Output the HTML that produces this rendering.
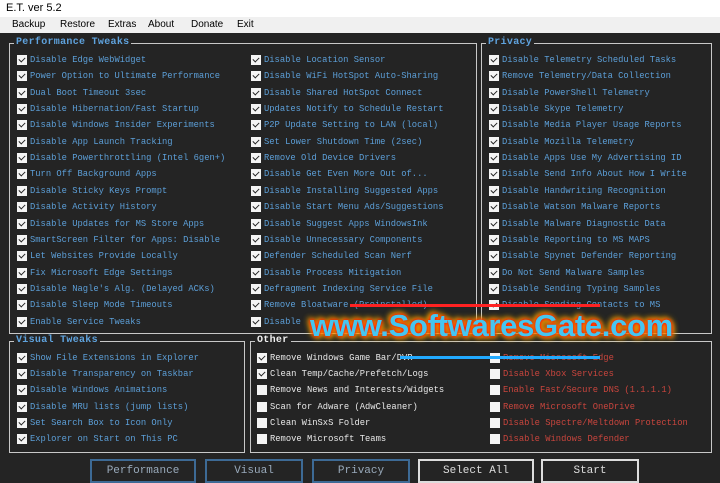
<!DOCTYPE html>
<html><head><meta charset="utf-8"><style>
*{margin:0;padding:0;box-sizing:border-box}
body{width:720px;height:480px;overflow:hidden;background:#242424;position:relative;font-family:"Liberation Mono",monospace;font-size:8.8px}
#tb{position:absolute;left:0;top:0;width:720px;height:17px;background:#fff;font-family:"Liberation Sans",sans-serif;font-size:11px;color:#000;padding:2px 0 0 6px}
#mb{position:absolute;left:0;top:17px;width:720px;height:16px;background:#f0f0f0;font-family:"Liberation Sans",sans-serif;font-size:10px;color:#000}
#mb span{position:absolute;top:2px}
.box{position:absolute;border:1px solid #c8c8c8}
.lg{position:absolute;top:-7px;left:4px;background:#242424;padding:0 2px;color:#5fa3de;font-weight:bold;font-size:10px;letter-spacing:.3px}
.i{position:absolute;height:12px;white-space:nowrap;color:#5c9fd8;line-height:12px}
.i:before{content:"";position:absolute;left:-13px;top:1px;width:10px;height:10px;background:#f4f4f4}
.c:after{content:"";position:absolute;left:-11px;top:3px;width:5px;height:3px;border-left:1.5px solid #222;border-bottom:1.5px solid #222;transform:rotate(-45deg)}
.w{color:#e8e8e8}.r{color:#c8453d}
.btn{position:absolute;top:459px;height:24px;border:2px solid #3d6a95;color:#9ab;font-size:11px;text-align:center;padding-top:4px}
#wm{position:absolute;left:310px;top:308px;font-family:"Liberation Sans",sans-serif;font-weight:bold;font-size:31px;color:#45c6f0;letter-spacing:-0.3px;text-shadow:0 0 3px #f00,0 0 5px #f30,0 0 8px #fc0,2px 2px 6px #fa0,-2px -2px 6px #fa0}
</style></head><body>
<div id="tb">E.T. ver 5.2</div>
<div id="mb"><span style="left:12px">Backup</span><span style="left:60px">Restore</span><span style="left:108px">Extras</span><span style="left:148px">About</span><span style="left:191px">Donate</span><span style="left:237px">Exit</span></div>

<div class="box" style="left:9px;top:43px;width:468px;height:291px"><div class="lg">Performance Tweaks</div></div>
<div class="box" style="left:481px;top:43px;width:231px;height:291px"><div class="lg">Privacy</div></div>
<div class="box" style="left:9px;top:341px;width:236px;height:112px"><div class="lg">Visual Tweaks</div></div>
<div class="box" style="left:250px;top:341px;width:462px;height:112px"><div class="lg" style="color:#eee">Other</div></div>

<div class="i c" style="left:30px;top:54px">Disable Edge WebWidget</div>
<div class="i c" style="left:30px;top:70px">Power Option to Ultimate Performance</div>
<div class="i c" style="left:30px;top:87px">Dual Boot Timeout 3sec</div>
<div class="i c" style="left:30px;top:103px">Disable Hibernation/Fast Startup</div>
<div class="i c" style="left:30px;top:119px">Disable Windows Insider Experiments</div>
<div class="i c" style="left:30px;top:136px">Disable App Launch Tracking</div>
<div class="i c" style="left:30px;top:152px">Disable Powerthrottling (Intel 6gen+)</div>
<div class="i c" style="left:30px;top:168px">Turn Off Background Apps</div>
<div class="i c" style="left:30px;top:185px">Disable Sticky Keys Prompt</div>
<div class="i c" style="left:30px;top:201px">Disable Activity History</div>
<div class="i c" style="left:30px;top:218px">Disable Updates for MS Store Apps</div>
<div class="i c" style="left:30px;top:234px">SmartScreen Filter for Apps: Disable</div>
<div class="i c" style="left:30px;top:250px">Let Websites Provide Locally</div>
<div class="i c" style="left:30px;top:267px">Fix Microsoft Edge Settings</div>
<div class="i c" style="left:30px;top:283px">Disable Nagle's Alg. (Delayed ACKs)</div>
<div class="i c" style="left:30px;top:299px">Disable Sleep Mode Timeouts</div>
<div class="i c" style="left:30px;top:316px">Enable Service Tweaks</div>

<div class="i c" style="left:264px;top:54px">Disable Location Sensor</div>
<div class="i c" style="left:264px;top:70px">Disable WiFi HotSpot Auto-Sharing</div>
<div class="i c" style="left:264px;top:87px">Disable Shared HotSpot Connect</div>
<div class="i c" style="left:264px;top:103px">Updates Notify to Schedule Restart</div>
<div class="i c" style="left:264px;top:119px">P2P Update Setting to LAN (local)</div>
<div class="i c" style="left:264px;top:136px">Set Lower Shutdown Time (2sec)</div>
<div class="i c" style="left:264px;top:152px">Remove Old Device Drivers</div>
<div class="i c" style="left:264px;top:168px">Disable Get Even More Out of...</div>
<div class="i c" style="left:264px;top:185px">Disable Installing Suggested Apps</div>
<div class="i c" style="left:264px;top:201px">Disable Start Menu Ads/Suggestions</div>
<div class="i c" style="left:264px;top:218px">Disable Suggest Apps WindowsInk</div>
<div class="i c" style="left:264px;top:234px">Disable Unnecessary Components</div>
<div class="i c" style="left:264px;top:250px">Defender Scheduled Scan Nerf</div>
<div class="i c" style="left:264px;top:267px">Disable Process Mitigation</div>
<div class="i c" style="left:264px;top:283px">Defragment Indexing Service File</div>
<div class="i c" style="left:264px;top:299px">Remove Bloatware (Preinstalled)</div>
<div class="i c" style="left:264px;top:316px">Disable</div>

<div class="i c" style="left:502px;top:54px">Disable Telemetry Scheduled Tasks</div>
<div class="i c" style="left:502px;top:70px">Remove Telemetry/Data Collection</div>
<div class="i c" style="left:502px;top:87px">Disable PowerShell Telemetry</div>
<div class="i c" style="left:502px;top:103px">Disable Skype Telemetry</div>
<div class="i c" style="left:502px;top:119px">Disable Media Player Usage Reports</div>
<div class="i c" style="left:502px;top:136px">Disable Mozilla Telemetry</div>
<div class="i c" style="left:502px;top:152px">Disable Apps Use My Advertising ID</div>
<div class="i c" style="left:502px;top:168px">Disable Send Info About How I Write</div>
<div class="i c" style="left:502px;top:185px">Disable Handwriting Recognition</div>
<div class="i c" style="left:502px;top:201px">Disable Watson Malware Reports</div>
<div class="i c" style="left:502px;top:218px">Disable Malware Diagnostic Data</div>
<div class="i c" style="left:502px;top:234px">Disable Reporting to MS MAPS</div>
<div class="i c" style="left:502px;top:250px">Disable Spynet Defender Reporting</div>
<div class="i c" style="left:502px;top:267px">Do Not Send Malware Samples</div>
<div class="i c" style="left:502px;top:283px">Disable Sending Typing Samples</div>
<div class="i c" style="left:502px;top:299px">Disable Sending Contacts to MS</div>

<div class="i c" style="left:30px;top:352px">Show File Extensions in Explorer</div>
<div class="i c" style="left:30px;top:368px">Disable Transparency on Taskbar</div>
<div class="i c" style="left:30px;top:384px">Disable Windows Animations</div>
<div class="i c" style="left:30px;top:401px">Disable MRU lists (jump lists)</div>
<div class="i c" style="left:30px;top:417px">Set Search Box to Icon Only</div>
<div class="i c" style="left:30px;top:433px">Explorer on Start on This PC</div>

<div class="i c w" style="left:270px;top:352px">Remove Windows Game Bar/DVR</div>
<div class="i c w" style="left:270px;top:368px">Clean Temp/Cache/Prefetch/Logs</div>
<div class="i w" style="left:270px;top:384px">Remove News and Interests/Widgets</div>
<div class="i w" style="left:270px;top:401px">Scan for Adware (AdwCleaner)</div>
<div class="i w" style="left:270px;top:417px">Clean WinSxS Folder</div>
<div class="i w" style="left:270px;top:433px">Remove Microsoft Teams</div>

<div class="i r" style="left:503px;top:352px">Remove Microsoft Edge</div>
<div class="i r" style="left:503px;top:368px">Disable Xbox Services</div>
<div class="i r" style="left:503px;top:384px">Enable Fast/Secure DNS (1.1.1.1)</div>
<div class="i r" style="left:503px;top:401px">Remove Microsoft OneDrive</div>
<div class="i r" style="left:503px;top:417px">Disable Spectre/Meltdown Protection</div>
<div class="i r" style="left:503px;top:433px">Disable Windows Defender</div>

<div class="btn" style="left:90px;width:106px">Performance</div>
<div class="btn" style="left:205px;width:98px">Visual</div>
<div class="btn" style="left:312px;width:98px">Privacy</div>
<div class="btn" style="left:418px;width:116px;border-color:#ddd;color:#ddd">Select All</div>
<div class="btn" style="left:541px;width:98px;border-color:#ddd;color:#ddd">Start</div>

<div style="position:absolute;left:350px;top:304px;width:250px;height:3px;background:#f22"></div>
<div style="position:absolute;left:400px;top:356px;width:200px;height:3px;background:#2af"></div>
<div id="wm">www.SoftwaresGate.com</div>
</body></html>
